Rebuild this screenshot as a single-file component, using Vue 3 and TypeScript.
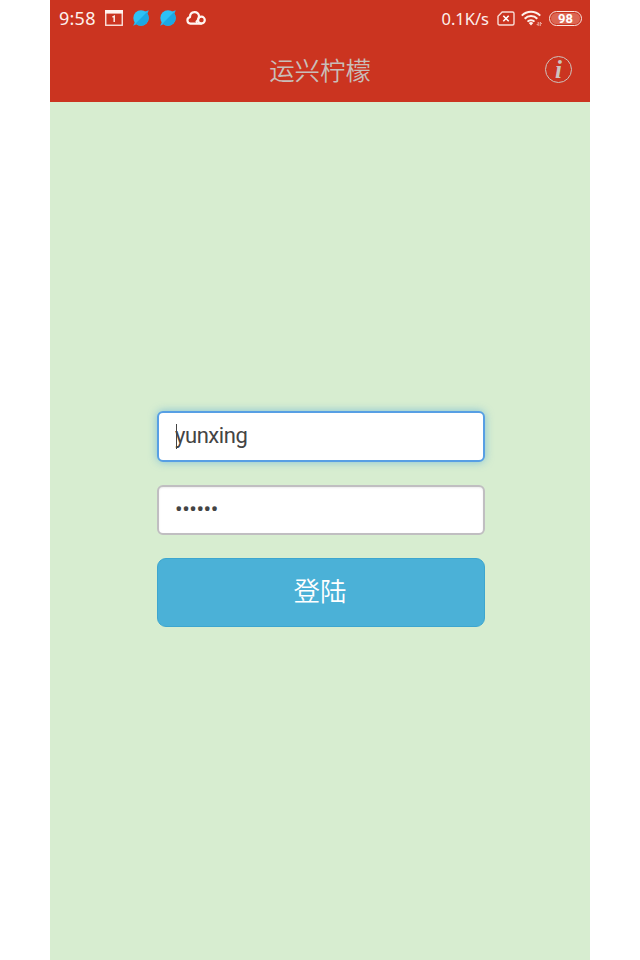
<script setup lang="ts">
import { ref } from 'vue'

const username = ref<string>('yunxing')
const password = ref<string>('123456')
const planets: number[] = [0, 1]
</script>

<template>
  <main class="phone">
    <header class="top">
      <div class="status">
        <span class="time">9:58</span>
        <svg class="calendar" width="18" height="16" viewBox="0 0 18 16">
          <rect x="0.75" y="0.75" width="16.5" height="14.5" fill="none" stroke="#fbe3dc" stroke-width="1.4" />
          <path d="M0 0h18v3.6H0z" fill="#fff3ef" />
          <path d="M7.4 7.2 9.2 6.2V12" fill="none" stroke="#fbece7" stroke-width="1.5" />
        </svg>
        <svg v-for="p in planets" :key="p" class="planet" width="18" height="18" viewBox="0 0 18 18">
          <path d="m1.2 16.8 2-4.8 2.4 2.8zM16.8 1.2l-4.6 1.6 2.8 2.6z" fill="#2bb4ec" />
          <circle cx="9" cy="9" r="7.7" fill="#2dc2f6" />
          <path d="M14.5 3.6A7.7 7.7 0 0 1 3.6 14.5z" fill="#1ca8e4" />
        </svg>
        <svg class="cloud" width="20" height="14" viewBox="0 0 20 14">
          <g fill="none" stroke="#fff6f2" stroke-width="2.2" stroke-linecap="round" stroke-linejoin="round">
            <path d="M15.4 12.6H4.4A3.3 3.3 0 0 1 4 6.1C4-.4 12.9-.3 13 5.1Q13 8.3 10.6 10.6" />
            <circle cx="15.4" cy="9.1" r="3.4" />
          </g>
        </svg>
        <span class="speed">0.1K/s</span>
        <svg class="sim" width="18" height="15" viewBox="0 0 18 15">
          <path d="M5.2 1H15.5Q17 1 17 2.5v10Q17 14 15.5 14h-13Q1 14 1 12.5V5.3z" fill="none" stroke="#f8dcd5" stroke-width="1.4" />
          <path d="m6.3 4.8 5.4 5.4m0-5.4-5.4 5.4" stroke="#fff" stroke-width="1.6" />
        </svg>
        <svg class="wifi" width="22" height="17" viewBox="0 0 22 17">
          <g fill="none" stroke="#fff0eb" stroke-width="2">
            <path d="M.8 5.6a13 13 0 0 1 18.4 0" />
            <path d="M3.7 8.7a8.9 8.9 0 0 1 12.6 0" />
            <path d="M6.5 11.6a4.9 4.9 0 0 1 7 0" />
          </g>
          <path d="m7.7 13 2.3 2.4 2.3-2.4a3.4 3.4 0 0 0-4.6 0z" fill="#fff0eb" />
          <path d="M17.2 12v3.5L15.7 14M19.2 16v-3.7l1.6 1.5" fill="none" stroke="#f5c8be" stroke-width="0.9" />
        </svg>
        <span class="battery"><span class="charge">98</span></span>
      </div>
      <div class="bar">
        <h1>运兴柠檬</h1>
        <button class="info" type="button">i</button>
      </div>
    </header>
    <form class="login" @submit.prevent>
      <div class="field focused">
        <input v-model="username" type="text" />
        <i class="caret"></i>
      </div>
      <div class="field">
        <input v-model="password" type="password" />
      </div>
      <button class="submit" type="submit">登陆</button>
    </form>
  </main>
</template>

<style>
body {
  background: #fff;
}
</style>

<style scoped>
.phone {
  width: 540px;
  height: 960px;
  margin: 0 auto;
  background: #d7edd0;
  font-family: Roboto, "Noto Sans CJK SC", sans-serif;
  overflow: hidden;
}
.top {
  height: 102px;
  background: #cb3420;
}
.status {
  display: flex;
  align-items: center;
  height: 36px;
  padding: 0 8px 0 9px;
  color: #fdf0ec;
  font-family: "Noto Sans", sans-serif;
}
.time {
  width: 46px;
  font-size: 18px;
  letter-spacing: 0.25px;
}
.calendar {
  margin-right: 9px;
}
.planet {
  margin-right: 9px;
}
.speed {
  margin-left: auto;
  margin-right: 8px;
  font-size: 16.5px;
}
.sim {
  margin-right: 6px;
}
.wifi {
  margin-right: 6px;
}
.battery {
  box-sizing: border-box;
  display: flex;
  width: 33px;
  height: 15px;
  padding: 1px;
  border: 1.5px solid #fae5df;
  border-radius: 8px;
}
.charge {
  flex: 1;
  border-radius: 6px;
  background: #dc6652;
  color: #fff;
  font-family: Roboto, sans-serif;
  font-size: 13px;
  font-weight: 700;
  line-height: 11px;
  text-align: center;
}
.bar {
  display: grid;
  grid-template-columns: 1fr auto 1fr;
  align-items: center;
  height: 66px;
  padding-right: 18px;
}
h1 {
  grid-column: 2;
  margin: 4px 0 0 18px;
  color: #c9beb9;
  font-size: 25.4px;
  font-weight: 350;
  line-height: 36px;
}
.info {
  justify-self: end;
  box-sizing: border-box;
  width: 27px;
  height: 27px;
  margin-top: 1px;
  padding: 0;
  border: 1.5px solid #cdc3be;
  border-radius: 50%;
  background: none;
  color: #cdc3be;
  font: italic 700 25px/23px "Liberation Serif", serif;
}
.login {
  display: flex;
  flex-direction: column;
  gap: 23px;
  width: 328px;
  margin: 309px 0 0 107px;
}
.field {
  position: relative;
  box-sizing: border-box;
  height: 51px;
  border: 2px solid #c0bec1;
  border-radius: 6px;
  background: #fff;
  box-shadow: inset 0 1px 2px rgba(0, 0, 0, 0.08);
}
.field + .field {
  height: 50px;
}
.field.focused {
  border-color: #579fe4;
  box-shadow: 0 0 9px rgba(82, 168, 216, 0.65);
}
input {
  display: block;
  box-sizing: border-box;
  width: 100%;
  height: 45px;
  padding: 0 16px;
  border: 0;
  outline: 0;
  background: transparent;
  color: #444;
  font-family: Roboto, sans-serif;
  font-size: 22px;
  letter-spacing: -0.45px;
}
input[type="password"] {
  height: 43px;
  font-size: 22.5px;
}
.caret {
  position: absolute;
  left: 17px;
  top: 11px;
  width: 1px;
  height: 25px;
  background: #444;
}
.submit {
  box-sizing: border-box;
  height: 69px;
  padding: 0 2px 7px 0;
  border: 1px solid #3da6cf;
  border-radius: 9px;
  background: #4bb1d7;
  color: #fff;
  font-family: Roboto, "Noto Sans CJK SC", sans-serif;
  font-size: 26.5px;
  font-weight: 350;
}
</style>
